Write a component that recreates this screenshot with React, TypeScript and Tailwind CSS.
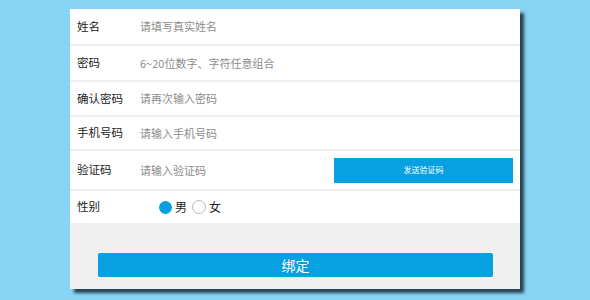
import React from "react";

const FONT = { fontFamily: '"Noto Sans CJK SC", "Noto Sans", sans-serif' };

interface FieldRowProps {
  label: string;
  placeholder: string;
  height: string;
  children?: React.ReactNode;
}

function FieldRow({ label, placeholder, height, children }: FieldRowProps) {
  return (
    <div className={`flex items-center border-b-2 border-[#efefef] ${height}`}>
      <span className="w-[70px] pl-[7px] text-[11.5px] text-[#222]">{label}</span>
      <span className="flex-1 text-[11px] text-[#8c8c8c]">{placeholder}</span>
      {children}
    </div>
  );
}

export default function App() {
  return (
    <div className="w-[590px] h-[300px] bg-[#88d4f4] pt-[9px] pl-[70px]" style={FONT}>
      {/* Form panel */}
      <div className="w-[450px] bg-white shadow-[4px_4px_3px_rgba(20,40,50,0.85)]">
        <FieldRow label="姓名" placeholder="请填写真实姓名" height="h-[37px]" />
        <FieldRow label="密码" placeholder="6~20位数字、字符任意组合" height="h-[36px]" />
        <FieldRow label="确认密码" placeholder="请再次输入密码" height="h-[35px]" />
        <FieldRow label="手机号码" placeholder="请输入手机号码" height="h-[34px]" />
        <FieldRow label="验证码" placeholder="请输入验证码" height="h-[40px]">
          <button className="mr-[7px] w-[179px] h-[25px] bg-[#07a0e0] text-white text-[8px]">
            发送验证码
          </button>
        </FieldRow>

        {/* Gender */}
        <div className="flex items-center h-[32px]">
          <span className="w-[89px] pl-[7px] text-[11.5px] text-[#222]">性别</span>
          <div className="flex items-center text-[12px] text-[#222]">
            <span className="w-[13px] h-[13px] rounded-full bg-[#07a0e0]" />
            <span className="ml-[3px]">男</span>
            <span className="ml-[5px] w-[14px] h-[14px] rounded-full border border-[#bbb] bg-white" />
            <span className="ml-[3px]">女</span>
          </div>
        </div>

        {/* Footer */}
        <div className="bg-[#f0f0f0] h-[66px] pt-[29px] px-[28px]">
          <button className="w-[395px] h-[24px] rounded-[2px] bg-[#07a0e0] text-white text-[14px] leading-none">
            绑定
          </button>
        </div>
      </div>
    </div>
  );
}
